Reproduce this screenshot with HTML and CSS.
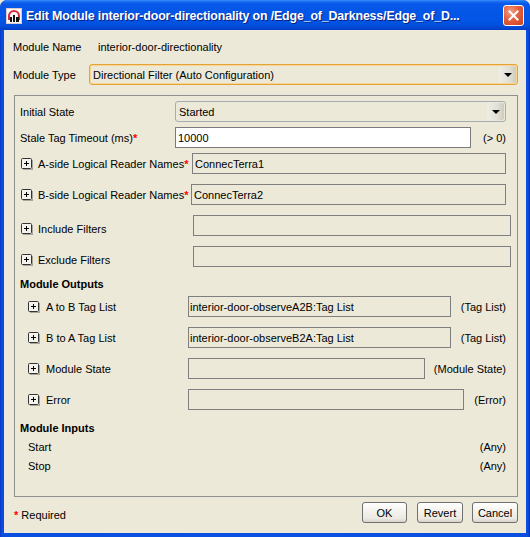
FILE: index.html
```html
<!DOCTYPE html>
<html>
<head>
<meta charset="utf-8">
<link rel="stylesheet" href="styles.css">
</head>
<body>
<div class="window">
  <div class="titlebar">
    <svg class="appicon" width="16" height="16" viewBox="0 0 16 16">
      <rect x="0.5" y="0.5" width="15" height="15" fill="#fbf7f7" stroke="#d9c9c9"/>
      <path d="M3 12 V8 A5 5 0 0 1 13 8 V12" fill="none" stroke="#d8283c" stroke-width="2"/>
      <rect x="4" y="9" width="2" height="5" fill="#111"/>
      <rect x="7" y="7" width="2" height="7" fill="#111"/>
      <rect x="10" y="9" width="3" height="5" fill="#111"/>
    </svg>
    <div class="title">Edit Module interior-door-directionality on /Edge_of_Darkness/Edge_of_D...</div>
    <div class="close">
      <svg width="11" height="11" viewBox="0 0 11 11"><path d="M1.5 1.5 L9.5 9.5 M9.5 1.5 L1.5 9.5" stroke="#fff" stroke-width="2" stroke-linecap="square"/></svg>
    </div>
  </div>
  <div class="client">
    <div class="toprow">
      <span class="lbl-name">Module Name</span>
      <span>interior-door-directionality</span>
    </div>
    <div class="typerow">
      <span class="lbl-type">Module Type</span>
      <div class="combo combo-focus w-type">
        <span class="combo-text">Directional Filter (Auto Configuration)</span>
        <span class="combo-btn"><span class="arrow"></span></span>
      </div>
    </div>

    <div class="panel">
      <div class="prow r-first">
        <span class="lbl-plain">Initial State</span>
        <div class="combo w-initial">
          <span class="combo-text">Started</span>
          <span class="combo-btn"><span class="arrow"></span></span>
        </div>
      </div>
      <div class="prow gap5">
        <span class="lbl-plain">Stale Tag Timeout (ms)<span class="req">*</span></span>
        <div class="field white w-stale">10000</div>
        <span class="hint">(&gt; 0)</span>
      </div>
      <div class="prow gap5">
        <span class="lbl-exp w172"><svg class="plus" width="12" height="12" viewBox="0 0 12 12"><rect x="0.5" y="0.5" width="10" height="10" rx="1" fill="#f3f2ec" stroke="#333"/><path d="M11.5 2v10M2 11.5h10" stroke="#a8a69c"/><path d="M3 5.5h5M5.5 3v5" stroke="#000"/></svg>A-side Logical Reader Names<span class="req">*</span></span>
        <div class="field w-a">ConnecTerra1</div>
      </div>
      <div class="prow gap10">
        <span class="lbl-exp w171"><svg class="plus" width="12" height="12" viewBox="0 0 12 12"><rect x="0.5" y="0.5" width="10" height="10" rx="1" fill="#f3f2ec" stroke="#333"/><path d="M11.5 2v10M2 11.5h10" stroke="#a8a69c"/><path d="M3 5.5h5M5.5 3v5" stroke="#000"/></svg>B-side Logical Reader Names<span class="req">*</span></span>
        <div class="field w-b">ConnecTerra2</div>
      </div>
      <div class="prow gap10">
        <span class="lbl-exp w173 low"><svg class="plus" width="12" height="12" viewBox="0 0 12 12"><rect x="0.5" y="0.5" width="10" height="10" rx="1" fill="#f3f2ec" stroke="#333"/><path d="M11.5 2v10M2 11.5h10" stroke="#a8a69c"/><path d="M3 5.5h5M5.5 3v5" stroke="#000"/></svg>Include Filters</span>
        <div class="field w-filter"></div>
      </div>
      <div class="prow gap10">
        <span class="lbl-exp w173 low"><svg class="plus" width="12" height="12" viewBox="0 0 12 12"><rect x="0.5" y="0.5" width="10" height="10" rx="1" fill="#f3f2ec" stroke="#333"/><path d="M11.5 2v10M2 11.5h10" stroke="#a8a69c"/><path d="M3 5.5h5M5.5 3v5" stroke="#000"/></svg>Exclude Filters</span>
        <div class="field w-filter"></div>
      </div>

      <div class="heading h-out">Module Outputs</div>
      <div class="prow orow gap2">
        <span class="lbl-exp w160"><svg class="plus" width="12" height="12" viewBox="0 0 12 12"><rect x="0.5" y="0.5" width="10" height="10" rx="1" fill="#f3f2ec" stroke="#333"/><path d="M11.5 2v10M2 11.5h10" stroke="#a8a69c"/><path d="M3 5.5h5M5.5 3v5" stroke="#000"/></svg>A to B Tag List</span>
        <div class="field tight w-tag">interior-door-observeA2B:Tag List</div>
        <span class="hint">(Tag List)</span>
      </div>
      <div class="prow orow gap10">
        <span class="lbl-exp w160"><svg class="plus" width="12" height="12" viewBox="0 0 12 12"><rect x="0.5" y="0.5" width="10" height="10" rx="1" fill="#f3f2ec" stroke="#333"/><path d="M11.5 2v10M2 11.5h10" stroke="#a8a69c"/><path d="M3 5.5h5M5.5 3v5" stroke="#000"/></svg>B to A Tag List</span>
        <div class="field tight w-tag">interior-door-observeB2A:Tag List</div>
        <span class="hint">(Tag List)</span>
      </div>
      <div class="prow orow gap10">
        <span class="lbl-exp w160"><svg class="plus" width="12" height="12" viewBox="0 0 12 12"><rect x="0.5" y="0.5" width="10" height="10" rx="1" fill="#f3f2ec" stroke="#333"/><path d="M11.5 2v10M2 11.5h10" stroke="#a8a69c"/><path d="M3 5.5h5M5.5 3v5" stroke="#000"/></svg>Module State</span>
        <div class="field tight w-state"></div>
        <span class="hint">(Module State)</span>
      </div>
      <div class="prow orow gap10">
        <span class="lbl-exp w160"><svg class="plus" width="12" height="12" viewBox="0 0 12 12"><rect x="0.5" y="0.5" width="10" height="10" rx="1" fill="#f3f2ec" stroke="#333"/><path d="M11.5 2v10M2 11.5h10" stroke="#a8a69c"/><path d="M3 5.5h5M5.5 3v5" stroke="#000"/></svg>Error</span>
        <div class="field tight w-error"></div>
        <span class="hint">(Error)</span>
      </div>

      <div class="heading h-in">Module Inputs</div>
      <div class="irow"><span>Start</span><span class="hint">(Any)</span></div>
      <div class="irow"><span>Stop</span><span class="hint">(Any)</span></div>
    </div>

    <div class="footer">
      <span class="required"><span class="req">*</span> Required</span>
      <button class="btn b-ok">OK</button>
      <button class="btn b-revert">Revert</button>
      <button class="btn b-cancel">Cancel</button>
    </div>
  </div>
</div>
</body>
</html>
```

FILE: styles.css
```css
* { box-sizing: border-box; }
html, body { margin: 0; padding: 0; background: #ECE9D8; }
body {
  font-family: "Liberation Sans", Arial, sans-serif;
  font-size: 11px;
  color: #000;
}
.window {
  width: 530px;
  height: 537px;
  background: linear-gradient(to right, #0838C8 0px, #0A4EE0 2px, #0B50E2 50%, #0A4EE0 calc(100% - 2px), #0530B8 100%);
  border-radius: 7px 7px 0 0;
  display: flex;
  flex-direction: column;
  overflow: hidden;
}
.titlebar {
  height: 30px;
  flex: none;
  display: flex;
  align-items: flex-start;
  padding: 0 6px 0 6px;
  border-radius: 7px 7px 0 0;
  background: linear-gradient(to bottom, #3A8BFB 0px, #1268F0 2px, #0858E8 4px, #0456E6 12px, #0355E5 20px, #0250DD 25px, #0246D3 28px, #003CC6 30px);
}
.appicon { margin-top: 8px; flex: none; }
.title {
  margin-left: 4px;
  margin-top: 8px;
  color: #fff;
  font-weight: bold;
  font-size: 12.4px;
  line-height: 16px;
  white-space: nowrap;
  overflow: hidden;
  flex: 1;
  text-shadow: 1px 1px 0 #0A1F80;
  letter-spacing: -0.15px;
}
.close {
  flex: none;
  width: 21px;
  height: 21px;
  margin-top: 5px;
  margin-left: 6px;
  border: 1px solid #fff;
  border-radius: 3px;
  background: radial-gradient(circle at 35% 30%, #F39E86 0%, #E4603E 45%, #C8401E 100%);
  display: flex;
  align-items: center;
  justify-content: center;
}
.client {
  flex: 1;
  margin: 0 4px 4px 4px;
  background: #ECE9D8;
  padding: 7px 8px 0 9px;
  display: flex;
  flex-direction: column;
}
.toprow {
  height: 20px;
  display: flex;
  align-items: center;
}
.lbl-name { width: 85px; flex: none; }
.typerow {
  margin-top: 7px;
  height: 21px;
  display: flex;
  align-items: center;
}
.lbl-type { width: 76px; flex: none; }

.combo {
  height: 21px;
  border: 1px solid #A5ACB2;
  border-radius: 3px;
  display: flex;
  align-items: center;
  background: #ECE9D8;
  flex: none;
}
.combo-focus {
  border: 1px solid #E3A33A;
  box-shadow: inset 0 0 0 1px #F8D590;
}
.combo-text { flex: 1; padding-left: 3px; white-space: nowrap; }
.combo-btn {
  width: 17px;
  height: 17px;
  margin-right: 1px;
  border-radius: 2px;
  background: linear-gradient(to right, #EEEDE6, #E2E0D5 60%, #CFCCBE);
  display: flex;
  align-items: center;
  justify-content: center;
}
.arrow {
  width: 0;
  height: 0;
  border-left: 4px solid transparent;
  border-right: 4px solid transparent;
  border-top: 4px solid #000;
  margin-top: 1px;
}
.w-type { width: 429px; }
.w-initial { width: 331px; }

.panel {
  margin-top: 10px;
  margin-left: 1px;
  width: 504px;
  height: 402px;
  flex: none;
  border: 1px solid #8E8F8F;
  padding-top: 5px;
  display: flex;
  flex-direction: column;
}
.prow {
  height: 21px;
  flex: none;
  display: flex;
  align-items: center;
  padding-left: 5px;
}
.gap2 { margin-top: 2px; }
.gap5 { margin-top: 5px; }
.gap10 { margin-top: 10px; }
.orow { padding-left: 13px; }
.lbl-plain { width: 155px; flex: none; white-space: nowrap; }
.lbl-exp {
  flex: none;
  display: flex;
  align-items: center;
  white-space: nowrap;
}
.lbl-exp.low { padding-top: 6px; }
.plus { flex: none; margin-right: 6px; }
.prow:not(.orow) .plus { margin-left: 1px; margin-right: 5px; }
.w172 { width: 172px; }
.w171 { width: 171px; }
.w173 { width: 173px; }
.w160 { width: 160px; }
.req { color: #F00; font-weight: bold; }

.field {
  flex: none;
  height: 21px;
  border: 1px solid #7F7F7F;
  padding-left: 2px;
  display: flex;
  align-items: center;
  white-space: nowrap;
  overflow: hidden;
}
.field.tight { padding-left: 1px; }
.field.white { background: #fff; border-color: #7A7A7A; }
.w-stale { width: 296px; }
.w-a { width: 314px; }
.w-b { width: 315px; }
.w-filter { width: 318px; }
.w-tag { width: 263px; }
.w-state { width: 237px; }
.w-error { width: 276px; }

.hint { margin-left: auto; margin-right: 11px; white-space: nowrap; }

.heading {
  font-weight: bold;
  padding-left: 5px;
  display: flex;
  align-items: center;
  flex: none;
}
.h-out { margin-top: 7px; height: 20px; }
.h-in { margin-top: 8px; height: 19px; }
.irow {
  height: 19px;
  flex: none;
  display: flex;
  align-items: center;
  padding-left: 13px;
}

.footer {
  margin-top: 5px;
  display: flex;
  align-items: flex-start;
}
.required {
  padding-top: 3px;
  line-height: 20px;
  padding-left: 1px;
}
.btn {
  height: 21px;
  font-family: "Liberation Sans", Arial, sans-serif;
  font-size: 11px;
  color: #000;
  border: 1px solid #707070;
  border-radius: 3px;
  background: linear-gradient(to bottom, #FFFFFF 0%, #F4F3EE 40%, #ECEAE2 80%, #D8D4C8 100%);
  padding: 0;
}
.b-ok { margin-left: auto; width: 45px; }
.b-revert { margin-left: 10px; width: 46px; }
.b-cancel { margin-left: 9px; width: 46px; }
```
